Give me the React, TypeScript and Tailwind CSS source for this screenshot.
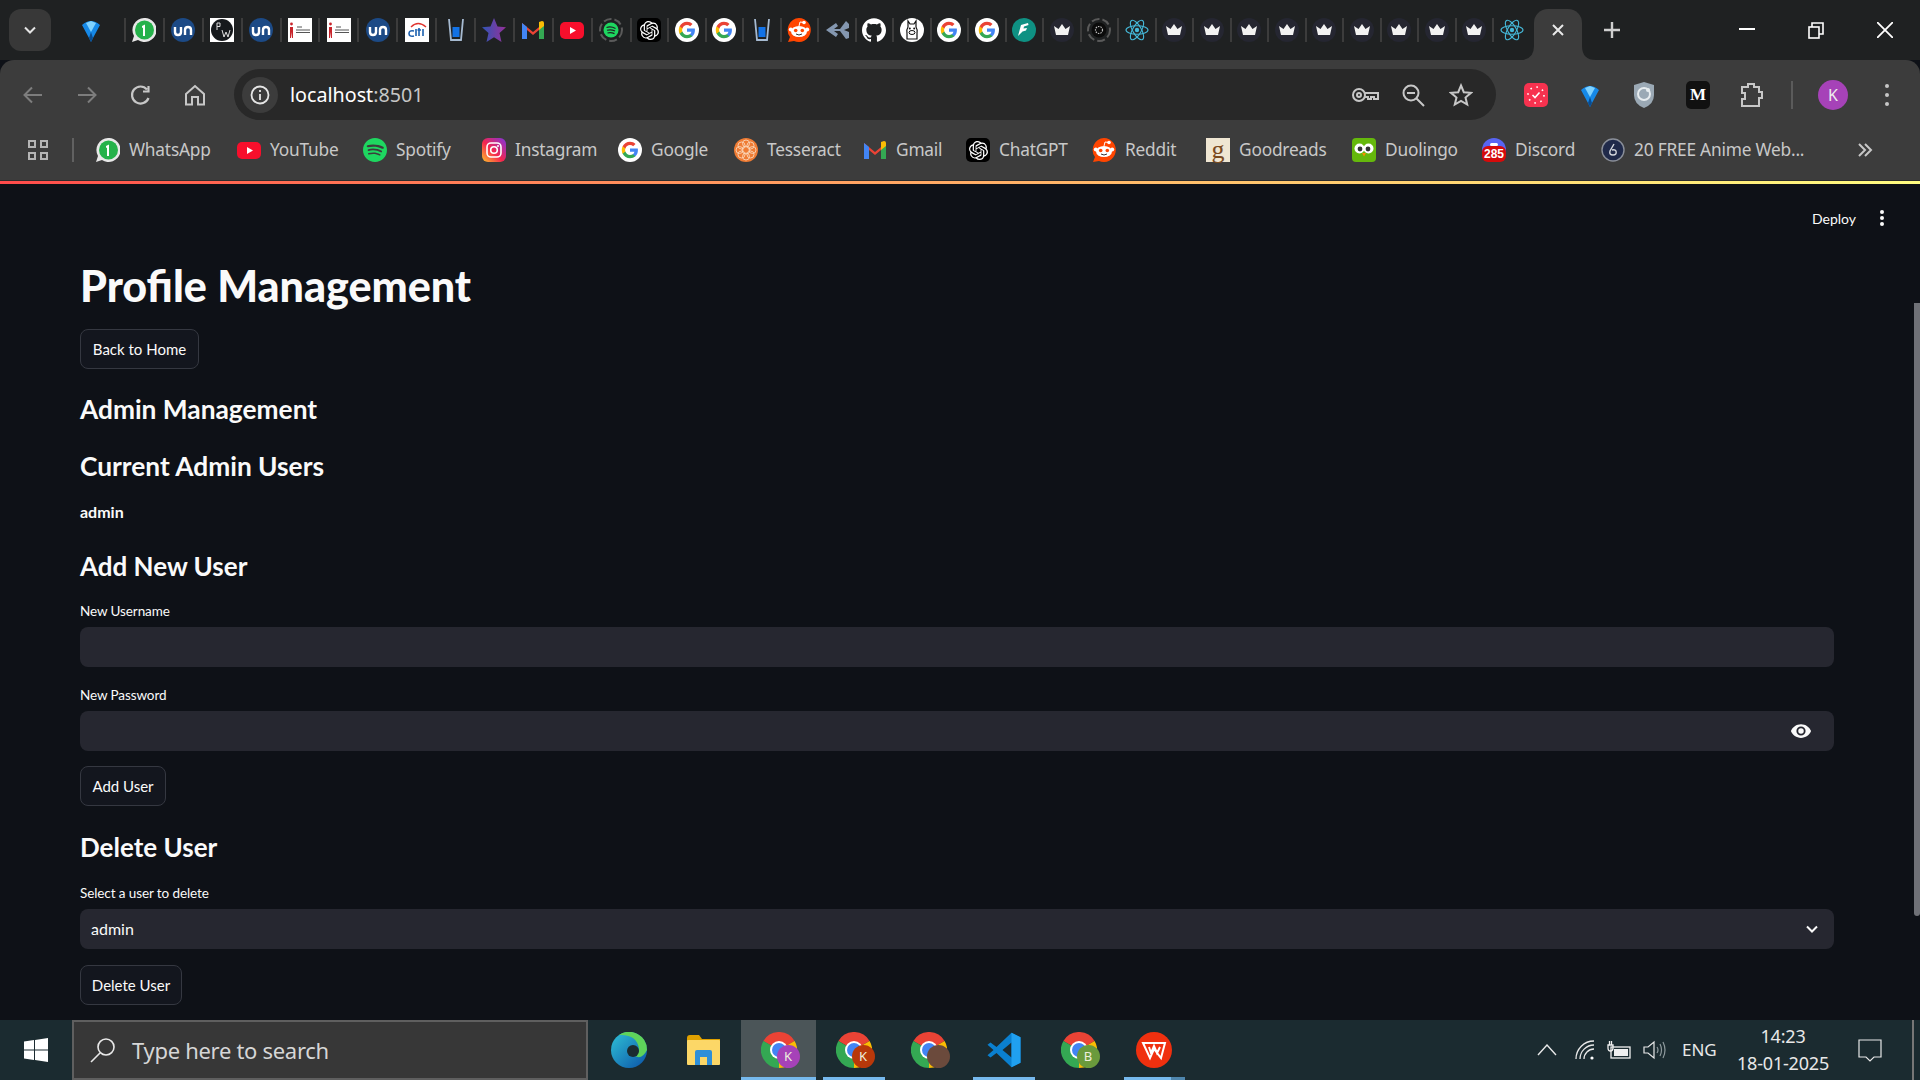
import type { ReactNode } from "react";
import { SiGithub, SiOpenai, SiSpotify } from "react-icons/si";

function Ic({ children, size = 24 }: { children: ReactNode; size?: number }) {
  return (
    <svg viewBox="0 0 24 24" width={size} height={size} className="shrink-0">
      {children}
    </svg>
  );
}

const Diamond = () => (
  <Ic>
    <path d="M3 7 Q12 -1 21 7 L14 20 L12 24 L10 20 Z" fill="#1689e8" />
    <path d="M7 5 L12 3 L17 5 L12 14 Z" fill="#7fd2ff" />
    <path d="M10 20 L12 14 L14 20 L12 24 Z" fill="#0a4c8f" />
  </Ic>
);
const Whats = () => (
  <Ic>
    <path d="M12 0 A12 12 0 1 1 6 22 L0 24 L2 18 A12 12 0 0 1 12 0Z" fill="#e8e8e8" />
    <circle cx="12.5" cy="12" r="9.5" fill="#25b24a" />
    <path d="M10 8 L13 6.5 V18 H11 V9.5 L10 10Z" fill="#fff" />
  </Ic>
);
const Un = () => (
  <Ic>
    <circle cx="12" cy="12" r="12" fill="#1c4a86" />
    <path d="M4 9 V14 Q4 17 7 17 Q10 17 10 14 V9 M14 17 V12 Q14 9 17 9 Q20 9 20 12 V17" stroke="#fff" strokeWidth="2.4" fill="none" />
  </Ic>
);
const Pw = () => (
  <Ic>
    <rect width="24" height="24" fill="#fff" />
    <circle cx="12" cy="12" r="11" fill="#16191c" />
    <path d="M7 5 V12 M7 5 H10 V8.5 H7 M12 12 L14 19 L16 14 L18 19 L20 12" stroke="#ddd" strokeWidth="1" fill="none" />
  </Ic>
);
const Ribbon = () => (
  <Ic>
    <rect width="24" height="24" fill="#fff" />
    <circle cx="3.5" cy="6" r="1.4" fill="#c8242b" />
    <path d="M2 9 H5 L5 20 H4 L3.5 14 L3 20 H2 Z" fill="#c8242b" />
    <path d="M9 9 H14 M8 12 H22 M8 14.5 H22" stroke="#555" strokeWidth="1" />
  </Ic>
);
const Citi = () => (
  <Ic>
    <rect width="24" height="24" fill="#fff" />
    <path d="M6 9 Q13 2 21 9" stroke="#e0342f" strokeWidth="1.4" fill="none" />
    <path d="M9 13 Q4 12 4 15.5 Q4 19 9 18 M11 11 V18 M14 10 V18 M12.5 12 H16 M18 11 V18" stroke="#1b5fae" strokeWidth="1.6" fill="none" />
  </Ic>
);
const Glass = () => (
  <Ic>
    <path d="M5 1 L7 22 H17 L19 1" stroke="#a6bad1" strokeWidth="1.8" fill="none" />
    <rect x="8.5" y="9" width="7" height="10" fill="#1272e6" />
  </Ic>
);
const Star = () => (
  <Ic>
    <defs>
      <linearGradient id="st" x1="0" x2="1">
        <stop offset="0" stopColor="#2f55b5" />
        <stop offset="1" stopColor="#97309a" />
      </linearGradient>
    </defs>
    <path d="M12 0 L15.5 8.5 L24 9.2 L17.5 15 L19.5 24 L12 19.3 L4.5 24 L6.5 15 L0 9.2 L8.5 8.5Z" fill="url(#st)" />
  </Ic>
);
const Gmail = () => (
  <Ic>
    <path d="M1 21 V5 L12 14 L23 5 V21 H18 V12 L12 17 L6 12 V21Z" fill="#ea4335" />
    <path d="M1 21 V5 L6 9 V21Z" fill="#4285f4" />
    <path d="M18 9 L23 5 V21 H18Z" fill="#34a853" />
    <path d="M18 4 L21 3 Q23 3 23 5 V8 L18 12Z" fill="#fbbc05" />
  </Ic>
);
const Yt = () => (
  <Ic>
    <rect y="4" width="24" height="17" rx="5" fill="#f70f2c" />
    <path d="M10 9 L16 12.5 L10 16Z" fill="#fff" />
  </Ic>
);
const SpotDim = () => (
  <Ic>
    <circle cx="12" cy="12" r="11" stroke="#5a5a5a" strokeWidth="2" strokeDasharray="8 3" fill="none" />
    <circle cx="12" cy="12" r="7.5" fill="#1ed760" />
    <path d="M7.5 9.5 Q12 8 16.5 10.5 M8 12.3 Q12 11 16 13 M8.5 15 Q12 14 15.5 15.6" stroke="#1f2122" strokeWidth="1.2" fill="none" />
  </Ic>
);
const Oai = () => (
  <div className="w-[24px] h-[24px] rounded-[5px] bg-black flex items-center justify-center shrink-0">
    <SiOpenai className="text-white" size={19} />
  </div>
);
const Goog = () => (
  <Ic>
    <circle cx="12" cy="12" r="12" fill="#fff" />
    <g transform="translate(3 3) scale(0.75)">
      <path d="M22.56 12.25c0-.78-.07-1.53-.2-2.25H12v4.26h5.92c-.26 1.37-1.04 2.53-2.21 3.31v2.77h3.57c2.08-1.92 3.28-4.74 3.28-8.09z" fill="#4285F4" />
      <path d="M12 23c2.97 0 5.46-.98 7.28-2.66l-3.57-2.77c-.98.66-2.23 1.06-3.71 1.06-2.86 0-5.29-1.93-6.16-4.53H2.18v2.84C3.99 20.53 7.7 23 12 23z" fill="#34A853" />
      <path d="M5.84 14.09c-.22-.66-.35-1.36-.35-2.09s.13-1.43.35-2.09V7.07H2.18C1.43 8.55 1 10.22 1 12s.43 3.45 1.18 4.93l2.85-2.22.81-.62z" fill="#FBBC05" />
      <path d="M12 5.38c1.62 0 3.06.56 4.21 1.64l3.15-3.15C17.45 2.09 14.97 1 12 1 7.7 1 3.99 3.47 2.18 7.07l3.66 2.84c.87-2.6 3.3-4.53 6.16-4.53z" fill="#EA4335" />
    </g>
  </Ic>
);
const Reddit = () => (
  <Ic>
    <path d="M12 0 A12 12 0 1 1 7 23 L1 24 L3 19 A12 12 0 0 1 12 0Z" fill="#ff4500" />
    <ellipse cx="12" cy="13.5" rx="8" ry="5.5" fill="#fff" />
    <circle cx="3.8" cy="11.5" r="2" fill="#fff" />
    <circle cx="20.2" cy="11.5" r="2" fill="#fff" />
    <circle cx="17" cy="4.5" r="1.8" fill="#fff" />
    <path d="M12 8 L13 4 L17 4.5" stroke="#fff" strokeWidth="1" fill="none" />
    <circle cx="8.7" cy="12.5" r="1.8" fill="#ff4500" />
    <circle cx="15.3" cy="12.5" r="1.8" fill="#ff4500" />
    <path d="M9 16 Q12 18 15 16" stroke="#333" strokeWidth="1" fill="none" />
  </Ic>
);
const Share = () => (
  <Ic>
    <path d="M1 12 L11 5 L13 8 L9 11 L15 11 L21 3 L24 6 V10 L19 12 L24 14 V20 L21 21 L15 13 L9 13 L13 16 L11 19Z" fill="#8497b0" />
  </Ic>
);
const Hub = () => <SiGithub className="text-white shrink-0" size={24} />;
const Ollama = () => (
  <Ic>
    <circle cx="12" cy="12" r="12" fill="#fff" />
    <path d="M8 9 V3 L10 6 H14 L16 3 V9 Q18 12 17 16 V21 H7 V16 Q6 12 8 9Z" stroke="#111" strokeWidth="1.2" fill="#fff" />
    <circle cx="9.8" cy="10.5" r="1" fill="#111" />
    <circle cx="14.2" cy="10.5" r="1" fill="#111" />
    <ellipse cx="12" cy="14.5" rx="3" ry="2" stroke="#111" strokeWidth="1" fill="none" />
  </Ic>
);
const Flash = () => (
  <Ic>
    <circle cx="12" cy="12" r="12" fill="#0f9183" />
    <path d="M16 5 L9 7 L6 18 L10.5 13.5 L14 12.5 L15 10 L11.5 10.5 L12 8.5 L16.5 7Z" fill="#fff" />
  </Ic>
);
const Crown = () => (
  <Ic>
    <circle cx="12" cy="12" r="12" fill="#252631" />
    <path d="M4 8 L8.5 11 L12 6 L15.5 11 L20 8 L18 17 H6Z" fill="#f2f2f2" />
  </Ic>
);
const Spin = () => (
  <Ic>
    <circle cx="12" cy="12" r="11" stroke="#5a5a5a" strokeWidth="2" strokeDasharray="8 3" fill="none" />
    <circle cx="12" cy="12" r="7.5" fill="#0b0b0b" />
    <circle cx="12" cy="12" r="3.5" stroke="#bbb" strokeWidth="1.2" strokeDasharray="1.5 1" fill="none" />
  </Ic>
);
const ReactLogo = () => (
  <Ic>
    <g stroke="#45b8d8" strokeWidth="1.1" fill="none">
      <ellipse cx="12" cy="12" rx="11" ry="4.3" />
      <ellipse cx="12" cy="12" rx="11" ry="4.3" transform="rotate(60 12 12)" />
      <ellipse cx="12" cy="12" rx="11" ry="4.3" transform="rotate(120 12 12)" />
    </g>
    <circle cx="12" cy="12" r="2.2" fill="#45b8d8" />
  </Ic>
);
const Spotify = () => <SiSpotify className="text-[#1ed760] shrink-0" size={24} />;
const Insta = () => (
  <Ic>
    <defs>
      <linearGradient id="ig" x1="0" y1="1" x2="1" y2="0">
        <stop offset="0" stopColor="#fdc42c" />
        <stop offset="0.45" stopColor="#f5254d" />
        <stop offset="1" stopColor="#7f35e0" />
      </linearGradient>
    </defs>
    <rect width="24" height="24" rx="6" fill="url(#ig)" />
    <rect x="5" y="5" width="14" height="14" rx="4" stroke="#fff" strokeWidth="1.6" fill="none" />
    <circle cx="12" cy="12" r="3.3" stroke="#fff" strokeWidth="1.6" fill="none" />
    <circle cx="16" cy="8" r="1" fill="#fff" />
  </Ic>
);
const Tess = () => (
  <Ic>
    <circle cx="12" cy="12" r="12" fill="#ef7b33" />
    <g stroke="#fbd6b8" strokeWidth="0.9" fill="none">
      <circle cx="12" cy="12" r="4" />
      <circle cx="12" cy="5.5" r="3.5" />
      <circle cx="12" cy="18.5" r="3.5" />
      <circle cx="5.5" cy="12" r="3.5" />
      <circle cx="18.5" cy="12" r="3.5" />
      <circle cx="7.5" cy="7.5" r="3.5" />
      <circle cx="16.5" cy="7.5" r="3.5" />
      <circle cx="7.5" cy="16.5" r="3.5" />
      <circle cx="16.5" cy="16.5" r="3.5" />
    </g>
  </Ic>
);
const Good = () => (
  <div className="w-[24px] h-[24px] bg-[#efe6d2] flex items-center justify-center shrink-0 font-['Liberation_Serif',serif] text-[26px] leading-[18px] text-[#7a4a1e]">
    g
  </div>
);
const Duo = () => (
  <Ic>
    <rect width="24" height="24" rx="4" fill="#65b80c" />
    <circle cx="7.5" cy="10.5" r="5" fill="#fff" />
    <circle cx="16.5" cy="10.5" r="5" fill="#fff" />
    <circle cx="8" cy="11" r="2.4" fill="#333" />
    <circle cx="16" cy="11" r="2.4" fill="#333" />
    <path d="M10 15 H14 L12 18.5Z" fill="#f49000" />
  </Ic>
);
const Disc = () => (
  <div className="relative w-[24px] h-[24px] shrink-0">
    <div className="absolute left-0 top-0 w-[24px] h-[16px] rounded-t-full bg-[#5865f2]" />
    <div className="absolute left-[8px] top-[5px] w-[8px] h-[3px] rounded-full bg-white" />
    <div className="absolute left-0 top-[8px] w-[24px] h-[16px] rounded-[6px] bg-[#d50b0b] text-white text-[12px] leading-[16px] font-bold text-center font-['Liberation_Sans',sans-serif]">
      285
    </div>
  </div>
);
const Anime = () => (
  <Ic>
    <circle cx="12" cy="12" r="11" fill="#202a4a" stroke="#8a8f99" strokeWidth="1.4" />
    <path d="M13 6 L9 13 Q8 17 12 17 Q16 17 15 13 Q14 11 11 12" stroke="#d5d8de" strokeWidth="1.4" fill="none" />
  </Ic>
);

const tabsA = [Whats, Un, Pw, Un, Ribbon, Ribbon, Un, Citi, Glass, Star, Gmail, Yt, SpotDim];
const tabsB = [
  Oai, Goog, Goog, Glass, Reddit, Share, Hub, Ollama, Goog, Goog, Flash, Crown, Spin, ReactLogo,
  Crown, Crown, Crown, Crown, Crown, Crown, Crown, Crown, Crown, ReactLogo,
];

const marks = [
  { w: "w-[141px]", Icon: Whats, label: "WhatsApp" },
  { w: "w-[126px]", Icon: Yt, label: "YouTube" },
  { w: "w-[119px]", Icon: Spotify, label: "Spotify" },
  { w: "w-[136px]", Icon: Insta, label: "Instagram" },
  { w: "w-[116px]", Icon: Goog, label: "Google" },
  { w: "w-[129px]", Icon: Tess, label: "Tesseract" },
  { w: "w-[103px]", Icon: Gmail, label: "Gmail" },
  { w: "w-[126px]", Icon: Oai, label: "ChatGPT" },
  { w: "w-[114px]", Icon: Reddit, label: "Reddit" },
  { w: "w-[146px]", Icon: Good, label: "Goodreads" },
  { w: "w-[130px]", Icon: Duo, label: "Duolingo" },
  { w: "w-[119px]", Icon: Disc, label: "Discord" },
  { w: "w-[240px]", Icon: Anime, label: "20 FREE Anime Web..." },
];

function Tab({ Icon, w }: { Icon: () => ReactNode; w: string }) {
  return (
    <div className={`${w} h-[24px] flex items-center shrink-0`}>
      <div className="w-[2px] h-[24px] bg-[#3c3c3c] shrink-0" />
      <div className="flex-1 flex justify-center">
        <Icon />
      </div>
    </div>
  );
}

function TabStrip() {
  return (
    <div className="h-[60px] bg-[#1f2122] flex items-center">
      <div className="ml-[9px] w-[42px] h-[42px] rounded-[12px] bg-[#383838] flex items-center justify-center">
        <svg width="16" height="16" viewBox="0 0 16 16" fill="none" stroke="#e4e4e4" strokeWidth="2">
          <path d="M3 5.5 L8 10.5 L13 5.5" />
        </svg>
      </div>
      <div className="w-[73px] pl-[6px] flex justify-center">
        <Diamond />
      </div>
      {tabsA.map((Icon, i) => (
        <Tab key={i} Icon={Icon} w="w-[38.9px]" />
      ))}
      {tabsB.map((Icon, i) => (
        <Tab key={i} Icon={Icon} w="w-[37.5px]" />
      ))}
      <div className="relative self-end ml-[4px] w-[48px] h-[51px] pb-[9px] rounded-t-[14px] bg-[#3c3c3c] flex items-center justify-center shrink-0">
        <svg width="14" height="14" viewBox="0 0 14 14" stroke="#e8e8e8" strokeWidth="2">
          <path d="M2 2 L12 12 M12 2 L2 12" />
        </svg>
        <svg className="absolute bottom-0 left-[-14px]" width="14" height="14" viewBox="0 0 14 14">
          <path d="M14 0 V14 H0 Q14 14 14 0Z" fill="#3c3c3c" />
        </svg>
        <svg className="absolute bottom-0 right-[-14px]" width="14" height="14" viewBox="0 0 14 14">
          <path d="M0 0 V14 H14 Q0 14 0 0Z" fill="#3c3c3c" />
        </svg>
      </div>
      <svg className="ml-[18px] shrink-0" width="24" height="24" viewBox="0 0 24 24" stroke="#cfcfcf" strokeWidth="2.4">
        <path d="M12 4 V20 M4 12 H20" />
      </svg>
      <div className="ml-auto flex items-center shrink-0">
        <div className="w-[69px] flex justify-center">
          <svg width="16" height="16" viewBox="0 0 16 16" stroke="#fff" strokeWidth="2">
            <path d="M0 7 H16" />
          </svg>
        </div>
        <div className="w-[69px] flex justify-center">
          <svg width="16" height="17" viewBox="0 0 16 17" stroke="#fff" strokeWidth="1.6" fill="none">
            <rect x="1" y="5" width="10" height="11" />
            <path d="M4 5 V1 H15 V12 H11" />
          </svg>
        </div>
        <div className="w-[70px] flex justify-center">
          <svg width="16" height="16" viewBox="0 0 16 16" stroke="#fff" strokeWidth="1.8">
            <path d="M0 0 L16 16 M16 0 L0 16" />
          </svg>
        </div>
      </div>
    </div>
  );
}

function NavIcon({ children }: { children: ReactNode }) {
  return <div className="w-[54px] flex justify-center shrink-0">{children}</div>;
}

function Toolbar() {
  return (
    <div className="h-[60px] pt-[9px] bg-[#3c3c3c] rounded-t-[14px] flex items-center">
      <div className="ml-[6px] flex items-center">
        <NavIcon>
          <svg width="24" height="24" viewBox="0 0 24 24" fill="none" stroke="#7d7d7d" strokeWidth="2">
            <path d="M21 12 H4 M11 4.5 L3.5 12 L11 19.5" />
          </svg>
        </NavIcon>
        <NavIcon>
          <svg width="24" height="24" viewBox="0 0 24 24" fill="none" stroke="#7d7d7d" strokeWidth="2">
            <path d="M3 12 H20 M13 4.5 L20.5 12 L13 19.5" />
          </svg>
        </NavIcon>
        <NavIcon>
          <svg width="24" height="24" viewBox="0 0 24 24" fill="none" stroke="#c7c7c7" strokeWidth="2.2">
            <path d="M19.5 15 A8.5 8.5 0 1 1 18 6.5 M19.5 3 V8.5 H14" />
          </svg>
        </NavIcon>
        <NavIcon>
          <svg width="24" height="24" viewBox="0 0 24 24" fill="none" stroke="#c7c7c7" strokeWidth="2">
            <path d="M3 11 L12 3 L21 11 V21.5 H15 V14 H9 V21.5 H3Z" />
          </svg>
        </NavIcon>
      </div>
      <div className="ml-[12px] w-[1262px] h-[51px] rounded-full bg-[#282828] flex items-center pl-[8px] pr-[23px] shrink-0">
        <div className="w-[36px] h-[36px] rounded-full bg-[#3c3c3c] flex items-center justify-center">
          <svg width="20" height="20" viewBox="0 0 20 20" fill="none" stroke="#e6e6e6" strokeWidth="1.8">
            <circle cx="10" cy="10" r="8.5" />
            <path d="M10 9 V15 M10 5 V7" />
          </svg>
        </div>
        <span className="ml-[12px] text-[19.7px] text-white font-['Noto_Sans',sans-serif]">
          localhost<span className="text-[#c6c6c6]">:8501</span>
        </span>
        <div className="ml-auto flex items-center gap-[22px]">
          <svg width="28" height="24" viewBox="0 0 28 24" fill="none" stroke="#c7c7c7" strokeWidth="2">
            <circle cx="8" cy="12" r="6" />
            <circle cx="8" cy="12" r="2" />
            <path d="M14 10 H27 V16 H23 V14 H20 V16 H17 V14 H14" />
          </svg>
          <svg width="24" height="24" viewBox="0 0 24 24" fill="none" stroke="#c7c7c7" strokeWidth="2">
            <circle cx="10" cy="10" r="7.5" />
            <path d="M6 10 H14 M15.5 15.5 L23 23" />
          </svg>
          <svg className="ml-[2px]" width="24" height="24" viewBox="0 0 24 24" fill="none" stroke="#c7c7c7" strokeWidth="2">
            <path d="M12 2.5 L14.8 9.2 L22 9.8 L16.5 14.5 L18.2 21.5 L12 17.8 L5.8 21.5 L7.5 14.5 L2 9.8 L9.2 9.2Z" />
          </svg>
        </div>
      </div>
      <div className="ml-[13px] flex items-center">
        <NavIcon>
          <svg width="24" height="24" viewBox="0 0 24 24">
            <rect width="24" height="24" rx="5" fill="#f7324f" />
            <circle cx="12" cy="12" r="8" stroke="#fff" strokeWidth="1.6" strokeDasharray="1.6 4.7" fill="none" />
            <path d="M8.5 12 L11 14.5 L15.5 9.5" stroke="#fff" strokeWidth="1.6" fill="none" />
          </svg>
        </NavIcon>
        <NavIcon>
          <Diamond />
        </NavIcon>
        <NavIcon>
          <svg width="24" height="28" viewBox="0 0 24 28">
            <path d="M12 1 L22 4 V14 Q22 23 12 27 Q2 23 2 14 V4Z" fill="#9ba9b5" />
            <circle cx="12" cy="13" r="6" stroke="#e7ecef" strokeWidth="2" fill="none" />
            <circle cx="16" cy="9" r="2" fill="#e7ecef" />
          </svg>
        </NavIcon>
        <NavIcon>
          <div className="w-[24px] h-[28px] rounded-[5px] bg-[#111] text-white text-[17px] leading-[28px] text-center font-bold font-['Liberation_Serif',serif]">
            M
          </div>
        </NavIcon>
        <NavIcon>
          <svg width="24" height="26" viewBox="0 0 24 26" fill="none" stroke="#c7c7c7" strokeWidth="2">
            <path d="M2 5 H8 V2 H14 V5 H19 V10 H22 V16 H19 V24 H2 V17 H5 V11 H2Z" />
          </svg>
        </NavIcon>
      </div>
      <div className="ml-[12px] w-[2px] h-[28px] bg-[#5b5b5b] shrink-0" />
      <div className="ml-[25px] w-[30px] h-[30px] rounded-full bg-[#a642b8] text-[#eee] text-[16px] leading-[30px] text-center shrink-0 font-['Noto_Sans',sans-serif]">
        K
      </div>
      <div className="ml-[37px] flex flex-col gap-[5px]">
        <div className="w-[4px] h-[4px] rounded-full bg-[#c7c7c7]" />
        <div className="w-[4px] h-[4px] rounded-full bg-[#c7c7c7]" />
        <div className="w-[4px] h-[4px] rounded-full bg-[#c7c7c7]" />
      </div>
    </div>
  );
}

function Bookmarks() {
  return (
    <div className="h-[61px] bg-[#3c3c3c] flex items-center border-b border-[#2d2d2d] relative font-['Noto_Sans',sans-serif]">
      <div className="ml-[28px] grid grid-cols-2 gap-[4px] shrink-0">
        <div className="w-[8px] h-[8px] border-2 border-[#b5b5b5]" />
        <div className="w-[8px] h-[8px] border-2 border-[#b5b5b5]" />
        <div className="w-[8px] h-[8px] border-2 border-[#b5b5b5]" />
        <div className="w-[8px] h-[8px] border-2 border-[#b5b5b5]" />
      </div>
      <div className="ml-[24px] w-[2px] h-[24px] bg-[#616161] shrink-0" />
      <div className="ml-[22px] flex items-center">
        {marks.map(({ w, Icon, label }) => (
          <div key={label} className={`${w} flex items-center gap-[9px] shrink-0`}>
            <Icon />
            <span className="text-[17.3px] text-[#c8c8c8] whitespace-nowrap tracking-[-0.2px]">{label}</span>
          </div>
        ))}
      </div>
      <svg className="ml-[15px] shrink-0" width="18" height="18" viewBox="0 0 18 18" fill="none" stroke="#c7c7c7" strokeWidth="2">
        <path d="M3 3 L9 9 L3 15 M9 3 L15 9 L9 15" />
      </svg>
    </div>
  );
}

function Btn({ label, w, mt }: { label: string; w: string; mt: string }) {
  return (
    <div className={`${w} ${mt} h-[40px] rounded-[8px] border border-[#353841] bg-[#13161e] text-[15px] text-[#fafafa] flex items-center justify-center`}>
      {label}
    </div>
  );
}

function Field({ label, mt, children }: { label: string; mt: string; children?: ReactNode }) {
  return (
    <div className={mt}>
      <div className="h-[20px] text-[13.5px] leading-[20px] text-[#fafafa] tracking-[-0.1px]">{label}</div>
      <div className="mt-[6px] h-[40px] rounded-[8px] bg-[#262730] flex items-center justify-between text-[16px] text-[#fafafa]">
        {children}
      </div>
    </div>
  );
}

function Main() {
  return (
    <div className="relative flex-1 bg-[#0e1117] font-['Lato',sans-serif] overflow-hidden">
      <div className="h-[68px] pr-[36px] flex items-center justify-end gap-[24px]">
        <span className="text-[14px] text-[#fafafa]">Deploy</span>
        <div className="flex flex-col gap-[2px]">
          <div className="w-[4px] h-[4px] rounded-full bg-[#fafafa]" />
          <div className="w-[4px] h-[4px] rounded-full bg-[#fafafa]" />
          <div className="w-[4px] h-[4px] rounded-full bg-[#fafafa]" />
        </div>
      </div>
      <div className="pl-[80px] pr-[86px]">
        <h1 className="mt-[4px] h-[60px] text-[43px] leading-[60px] font-black text-[#fafafa]">Profile Management</h1>
        <Btn label="Back to Home" w="w-[119px]" mt="mt-[13px]" />
        <h2 className="mt-[20px] h-[40px] text-[26.3px] leading-[40px] font-bold text-[#fafafa]">Admin Management</h2>
        <h3 className="mt-[17px] h-[40px] text-[26.3px] leading-[40px] font-bold text-[#fafafa]">Current Admin Users</h3>
        <p className="mt-[14px] h-[24px] text-[16px] leading-[24px] font-bold text-[#fafafa]">admin</p>
        <h3 className="mt-[22px] h-[40px] text-[26px] leading-[40px] font-bold text-[#fafafa]">Add New User</h3>
        <Field label="New Username" mt="mt-[15px]" />
        <Field label="New Password" mt="mt-[18px]">
          <span />
          <svg className="mr-[22px]" width="22" height="22" viewBox="0 0 24 24" fill="#fafafa">
            <path d="M12 4.5C7 4.5 2.7 7.6 1 12c1.7 4.4 6 7.5 11 7.5s9.3-3.1 11-7.5c-1.7-4.4-6-7.5-11-7.5zM12 17a5 5 0 1 1 0-10 5 5 0 0 1 0 10zm0-8a3 3 0 1 0 0 6 3 3 0 0 0 0-6z" />
          </svg>
        </Field>
        <Btn label="Add User" w="w-[86px]" mt="mt-[15px]" />
        <h3 className="mt-[21px] h-[40px] text-[26px] leading-[40px] font-bold text-[#fafafa]">Delete User</h3>
        <Field label="Select a user to delete" mt="mt-[16px]">
          <span className="ml-[11px]">admin</span>
          <svg className="mr-[15px]" width="14" height="14" viewBox="0 0 14 14" fill="none" stroke="#fafafa" strokeWidth="2">
            <path d="M2 4.5 L7 9.5 L12 4.5" />
          </svg>
        </Field>
        <Btn label="Delete User" w="w-[102px]" mt="mt-[16px]" />
      </div>
      <div className="absolute right-0 top-[119px] w-[6px] h-[613px] rounded-b-full bg-[#6f7177]" />
    </div>
  );
}

const Chrome = ({ badge, color }: { badge: string; color: string }) => (
  <div className="relative w-[36px] h-[36px]">
    <svg width="36" height="36" viewBox="0 0 36 36">
      <path d="M18 18 L2.4 9 A18 18 0 0 1 33.6 9Z" fill="#ea4335" />
      <path d="M18 18 L33.6 9 A18 18 0 0 1 18 36Z" fill="#fbbc04" />
      <path d="M18 18 L18 36 A18 18 0 0 1 2.4 9Z" fill="#34a853" />
      <circle cx="18" cy="18" r="9" fill="#fff" />
      <circle cx="18" cy="18" r="7" fill="#4285f4" />
    </svg>
    <div className={`absolute right-[-3px] bottom-0 w-[23px] h-[23px] rounded-full ${color} text-[13px] leading-[23px] text-center text-[#eed] font-['Noto_Sans',sans-serif]`}>
      {badge}
    </div>
  </div>
);

function Taskbar() {
  return (
    <div className="h-[60px] bg-[#1b2b30] flex items-center relative shrink-0 font-['Noto_Sans',sans-serif] text-[#e8e8e8]">
      <svg className="ml-[24px] shrink-0" width="24" height="24" viewBox="0 0 24 24" fill="#fff">
        <path d="M0 3.4 L10 2 V11.4 H0Z M11 1.9 L24 0 V11.4 H11Z M0 12.6 H10 V22 L0 20.6Z M11 12.6 H24 V24 L11 22.1Z" />
      </svg>
      <div className="ml-[24px] w-[516px] h-[60px] bg-[#373737] border-2 border-[#5f5f5f] flex items-center shrink-0">
        <svg className="ml-[16px]" width="26" height="26" viewBox="0 0 26 26" fill="none" stroke="#e8e8e8" strokeWidth="1.6">
          <circle cx="16" cy="10" r="8" />
          <path d="M10 16 L1 25" />
        </svg>
        <span className="ml-[16px] text-[22px] text-[#d6d6d6] tracking-[-0.3px]">Type here to search</span>
      </div>
      <div className="ml-[3px] flex">
        <div className="w-[75px] h-[60px] flex items-center justify-center">
          <svg width="36" height="36" viewBox="0 0 36 36">
            <defs>
              <linearGradient id="ed" x1="0" y1="0" x2="1" y2="1">
                <stop offset="0" stopColor="#2fc2d6" />
                <stop offset="1" stopColor="#0b53a8" />
              </linearGradient>
            </defs>
            <circle cx="18" cy="18" r="18" fill="url(#ed)" />
            <path d="M36 18 A18 18 0 0 0 8 3 Q26 2 28 17 Q28 24 21 22 Q30 30 36 18Z" fill="#5fd35a" />
            <circle cx="22" cy="19" r="6" fill="#1b2b30" />
          </svg>
        </div>
        <div className="w-[75px] h-[60px] flex items-center justify-center">
          <svg width="33" height="30" viewBox="0 0 33 30">
            <path d="M0 3 Q0 0 3 0 H12 L15 4 H33 V28 H0Z" fill="#e0a100" />
            <rect y="5" width="33" height="25" rx="1" fill="#fcd767" />
            <path d="M8 30 V17 Q8 15 10 15 H23 Q25 15 25 17 V30 H20 V22 H13 V30Z" fill="#2f8fd8" />
          </svg>
        </div>
        <div className="relative w-[75px] h-[60px] bg-[#4b5558] flex items-center justify-center">
          <Chrome badge="K" color="bg-[#a642b8]" />
          <div className="absolute bottom-0 left-0 right-0 h-[3px] bg-[#76b9ed]" />
        </div>
        <div className="relative w-[75px] h-[60px] flex items-center justify-center">
          <Chrome badge="K" color="bg-[#b8380a]" />
          <div className="absolute bottom-0 left-[7px] right-[6px] h-[3px] bg-[#76b9ed]" />
        </div>
        <div className="w-[75px] h-[60px] flex items-center justify-center">
          <Chrome badge="" color="bg-[#6b4a3c]" />
        </div>
        <div className="relative w-[75px] h-[60px] flex items-center justify-center">
          <svg width="36" height="36" viewBox="0 0 24 24">
            <path d="M17 0.5 L23 3.5 V20.5 L17 23.5 L7 14 L3 17 L1 15.5 L5 12 L1 8.5 L3 7 L7 10 Z M17 7 L11 12 L17 17Z" fill="#0a80d0" fillRule="evenodd" />
            <path d="M17 0.5 L23 3.5 V20.5 L17 23.5Z" fill="#20a0f0" />
          </svg>
          <div className="absolute bottom-0 left-[7px] right-[6px] h-[3px] bg-[#76b9ed]" />
        </div>
        <div className="w-[75px] h-[60px] flex items-center justify-center">
          <Chrome badge="B" color="bg-[#6a9a3c]" />
        </div>
        <div className="relative w-[75px] h-[60px] flex items-center justify-center">
          <svg width="36" height="36" viewBox="0 0 36 36">
            <circle cx="18" cy="18" r="18" fill="#f0300f" />
            <path d="M7 11 H29 L25 26 L18 17 L14 26Z M13 15 L15 21 L18 14 L21 21 L24 15" stroke="#fff" strokeWidth="2" fill="none" />
          </svg>
          <div className="absolute bottom-0 left-[8px] w-[47px] h-[3px] bg-[#76b9ed]" />
          <div className="absolute bottom-0 left-[55px] w-[14px] h-[3px] bg-[#4f86ad]" />
        </div>
      </div>
      <div className="ml-auto flex items-center shrink-0">
        <svg width="20" height="12" viewBox="0 0 20 12" fill="none" stroke="#e8e8e8" strokeWidth="1.4">
          <path d="M1 11 L10 1 L19 11" />
        </svg>
        <svg className="ml-[18px]" width="20" height="20" viewBox="0 0 20 20" fill="none" stroke="#e8e8e8" strokeWidth="1.3">
          <path d="M1 19 A18 18 0 0 1 19 1 M5 19 A14 14 0 0 1 19 5 M9 19 A10 10 0 0 1 19 9" />
          <circle cx="17" cy="18" r="1.6" fill="#fff" stroke="none" />
        </svg>
        <svg className="ml-[12px]" width="24" height="20" viewBox="0 0 24 20" fill="none" stroke="#f0f0f0" strokeWidth="1.3">
          <rect x="4" y="7" width="19" height="11" />
          <rect x="7" y="9" width="14" height="7" fill="#f0f0f0" stroke="none" />
          <path d="M1 5 H6 V8 Q6 11 3.5 11 Q1 11 1 8Z M2.5 1 V5 M4.5 1 V5" />
        </svg>
        <svg className="ml-[12px]" width="24" height="20" viewBox="0 0 24 20" fill="none" stroke="#e8e8e8" strokeWidth="1.2">
          <path d="M1 7 H5 L11 2 V18 L5 13 H1Z" />
          <path d="M14 7 Q16 10 14 13 M17 4 Q20 10 17 16 M20 2 Q24 10 20 18" stroke="#8f9a9d" />
        </svg>
        <span className="ml-[15px] w-[34px] text-[17px] whitespace-nowrap">ENG</span>
        <div className="ml-[20px] w-[94px] text-center text-[18px] leading-[27px] tracking-[-0.2px] whitespace-nowrap">
          <div>14:23</div>
          <div>18-01-2025</div>
        </div>
        <svg className="ml-[28px]" width="24" height="24" viewBox="0 0 24 24" fill="none" stroke="#e8e8e8" strokeWidth="1.2">
          <path d="M1 2 H23 V19 H16 L12 23 L8 19 H1Z" />
        </svg>
        <div className="ml-[30px] mr-[6px] w-[2px] h-[60px] bg-[#777]" />
      </div>
    </div>
  );
}

export default function App() {
  return (
    <div className="w-[1920px] h-[1080px] flex flex-col overflow-hidden bg-[#0e1117]">
      <TabStrip />
      <Toolbar />
      <Bookmarks />
      <div className="h-[3px] bg-gradient-to-r from-[#ff4b4b] to-[#fffd80]" />
      <Main />
      <Taskbar />
    </div>
  );
}
